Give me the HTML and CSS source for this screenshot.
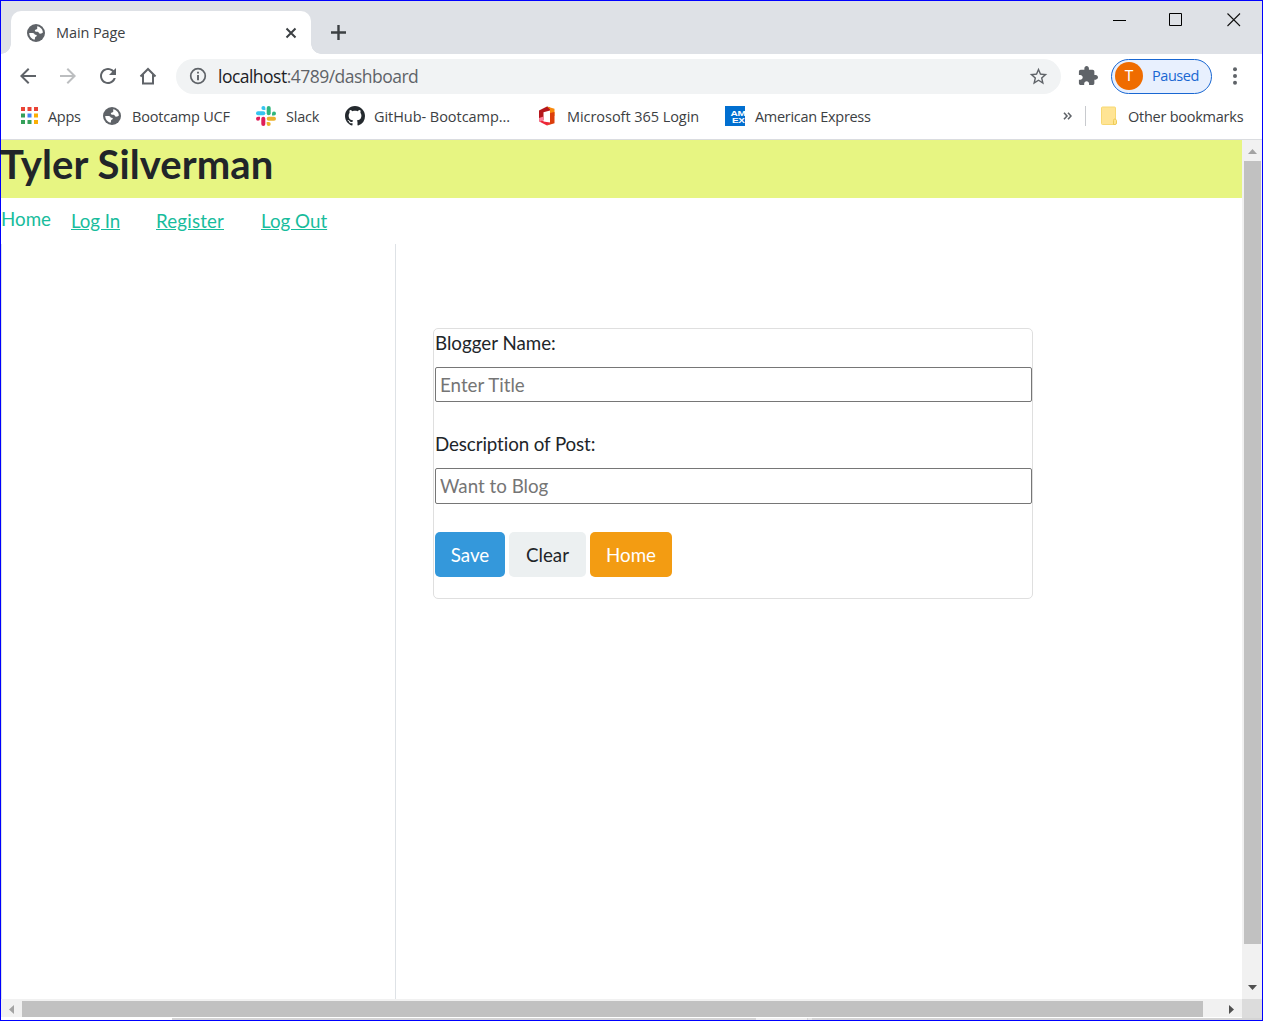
FILE: index.html
```html
<!DOCTYPE html>
<html lang="en">
<head>
<meta charset="utf-8">
<title>Main Page</title>
<link rel="stylesheet" href="styles.css">
</head>
<body>
<svg width="0" height="0" class="defs">
  <symbol id="globe" viewBox="0 0 18 18"><circle cx="9" cy="9" r="9" fill="#5f6368"/><path fill="#fff" d="M10.200 2.200c3.200.5 5.600 3.200 5.700 6.400-.9 1-2 1.400-3.300 1-.6-.2-.7-1.200-1.300-1.700-.8-.6-2.700.1-3.300-.6-.5-.7.1-1.700 1-1.800 1.200-.1 1.300-.4 1.200-1.200zM2.200 8.900h3.500c1.300.1 1.800.7 2 1.600.8.3 1.900 0 2.100 1.100.1 1.100-1.600 1.100-1.800 2l-.1 2C4.700 15.200 2.300 12.500 2.200 8.900z"/></symbol>
</svg>
<div class="window">
  <div class="tabstrip">
    <div class="tab">
      <svg class="fav" width="18" height="18"><use href="#globe"/></svg>
      <span class="tab-title">Main Page</span>
      <svg class="tab-close" width="12" height="12" viewBox="0 0 12 12"><path d="M1.500 1.500l9 9m0-9l-9 9" stroke="#3c4043" stroke-width="2"/></svg>
    </div>
    <svg class="newtab" width="16" height="16" viewBox="0 0 16 16"><path d="M7.500 0v15M0 7.500h15" stroke="#3c4043" stroke-width="2.400"/></svg>
    <div class="controls">
      <svg width="14" height="14" viewBox="0 0 14 14"><path d="M0 7.500h13" stroke="#000"/></svg>
      <svg width="14" height="14" viewBox="0 0 14 14"><path d="M.5.5h12v12H.5z" fill="none" stroke="#000"/></svg>
      <svg width="14" height="14" viewBox="0 0 14 14"><path d="M.5.500l12.500 12.500M13 .5L.5 13" stroke="#111" stroke-width="1.100"/></svg>
    </div>
  </div>
  <div class="toolbar">
    <div class="navbuttons">
      <svg width="24" height="24" viewBox="0 0 24 24" fill="#5f6368"><path d="M20 11H7.830l5.590-5.590L12 4l-8 8 8 8 1.410-1.410L7.830 13H20z"/></svg>
      <svg width="24" height="24" viewBox="0 0 24 24" fill="#bcbec0"><path d="M4 11h12.170l-5.590-5.590L12 4l8 8-8 8-1.410-1.410L16.170 13H4z"/></svg>
      <svg width="24" height="24" viewBox="0 0 24 24" fill="#5f6368"><path d="M17.650 6.350C16.200 4.900 14.210 4 12 4c-4.420 0-7.990 3.580-7.990 8s3.570 8 7.990 8c3.730 0 6.840-2.550 7.730-6h-2.080c-.82 2.330-3.040 4-5.650 4-3.310 0-6-2.690-6-6s2.690-6 6-6c1.660 0 3.140.69 4.220 1.780L13 11h7V4z"/></svg>
      <svg width="24" height="24" viewBox="0 0 24 24"><path d="M4.500 12.500L12 5l7.500 7.500M7 10.800V19.500h10V10.800" fill="none" stroke="#5f6368" stroke-width="2"/></svg>
    </div>
    <div class="omnibox">
      <svg width="18" height="18" viewBox="0 0 18 18"><circle cx="9" cy="9" r="7.300" fill="none" stroke="#5f6368" stroke-width="1.700"/><path d="M9 4.700v1.900M9 8v5.200" stroke="#5f6368" stroke-width="1.900"/></svg>
      <span class="url"><b>localhost</b>:4789/dashboard</span>
      <svg class="star" width="21" height="21" viewBox="0 0 24 24" fill="#5f6368"><path d="M22 9.240l-7.190-.62L12 2 9.190 8.630 2 9.240l5.460 4.730L5.820 21 12 17.270 18.180 21l-1.630-7.030zM12 15.400l-3.760 2.270 1-4.280-3.320-2.880 4.380-.38L12 6.100l1.710 4.040 4.380.38-3.320 2.880 1 4.280z"/></svg>
    </div>
    <svg class="puzzle" width="20" height="20" viewBox="1 1 22 22" fill="#5f6368"><path d="M20.500 11H19V7c0-1.100-.9-2-2-2h-4V3.500C13 2.120 11.880 1 10.500 1S8 2.120 8 3.500V5H4c-1.100 0-1.990.9-1.990 2v3.800H3.500c1.490 0 2.700 1.210 2.700 2.700s-1.210 2.700-2.700 2.700H2V20c0 1.100.9 2 2 2h3.800v-1.500c0-1.490 1.210-2.700 2.700-2.700s2.700 1.210 2.700 2.700V22H17c1.100 0 2-.9 2-2v-4h1.500c1.380 0 2.500-1.120 2.500-2.500S21.880 11 20.500 11z"/></svg>
    <div class="profile"><span class="avatar">T</span><span class="paused">Paused</span></div>
    <svg class="menu" width="6" height="18" viewBox="0 0 6 18" fill="#5f6368"><circle cx="3" cy="2.300" r="2"/><circle cx="3" cy="9" r="2"/><circle cx="3" cy="15.700" r="2"/></svg>
  </div>
  <div class="bookmarks">
    <div class="bm bm-apps"><svg width="18" height="18" viewBox="0 0 18 18"><path fill="#ea4335" d="M0 0h4v4H0zM6.500 0h4v4h-4zM13 0h4v4h-4z"/><path fill="#34a05a" d="M0 6.500h4v4H0zM0 13h4v4H0zM6.500 13h4v4h-4z"/><path fill="#4285f4" d="M6.500 6.500h4v4h-4z"/><path fill="#fbaf05" d="M13 6.500h4v4h-4zM13 13h4v4h-4z"/></svg><span>Apps</span></div>
    <div class="bm bm-ucf"><svg width="18" height="18"><use href="#globe"/></svg><span>Bootcamp UCF</span></div>
    <div class="bm bm-slack"><svg width="20" height="20" viewBox="0 0 20 20"><g fill="#36c5f0"><rect y="5.300" width="9.300" height="4" rx="2"/><path d="M7.400 0a2 2 0 0 1 2 2v2h-2a2 2 0 0 1 0-4z"/></g><g fill="#2eb67d"><rect x="10.700" width="4" height="9.300" rx="2"/><path d="M20 7.400a2 2 0 0 1-2 2h-2v-2a2 2 0 0 1 4 0z"/></g><g fill="#ecb22e"><rect x="10.700" y="10.700" width="9.300" height="4" rx="2"/><path d="M12.700 20a2 2 0 0 1-2-2v-2h2a2 2 0 0 1 0 4z"/></g><g fill="#e01e5a"><rect x="5.300" y="10.700" width="4" height="9.300" rx="2"/><path d="M0 12.700a2 2 0 0 1 2-2h2v2a2 2 0 0 1-4 0z"/></g></svg><span>Slack</span></div>
    <div class="bm bm-git"><svg width="20" height="20" viewBox="0 0 16 16" fill="#24292e"><path d="M8 0C3.580 0 0 3.580 0 8c0 3.540 2.290 6.530 5.470 7.590.4.07.55-.17.55-.38 0-.19-.01-.82-.01-1.490-2.010.37-2.530-.49-2.690-.94-.09-.23-.48-.94-.82-1.130-.28-.15-.68-.52-.01-.53.63-.01 1.080.58 1.230.82.72 1.210 1.870.87 2.330.66.07-.52.28-.87.51-1.070-1.780-.2-3.640-.89-3.640-3.950 0-.87.31-1.590.82-2.150-.08-.2-.36-1.020.08-2.120 0 0 .67-.21 2.200.82.64-.18 1.320-.27 2-.27s1.360.09 2 .27c1.530-1.040 2.200-.82 2.200-.82.44 1.100.16 1.920.08 2.120.51.56.82 1.270.82 2.150 0 3.070-1.870 3.750-3.650 3.950.29.25.54.73.54 1.480 0 1.070-.01 1.930-.01 2.200 0 .21.15.46.55.38A8.010 8.010 0 0 0 16 8c0-4.420-3.580-8-8-8z"/></svg><span>GitHub- Bootcamp...</span></div>
    <div class="bm bm-ms"><svg width="18" height="20" viewBox="0 0 18 20"><path fill="#b5161b" d="M1 4.500L9 .500l3 1v3L5.500 6.200V14L1 15.500z"/><path fill="#f98a0c" d="M9 .500l7.500 2.300V10H12V3.500z"/><path fill="#dc3e0c" d="M12 7l4.500-1v11.200L9 19.500l3-3z"/><path fill="#ed2738" d="M1.200 15.400L5.500 14.500v1l6.500 1V17l-3 2.500z"/><path fill="#ff7f9b" d="M1 12l4.500-1.500V14L1.200 15.400z"/></svg><span>Microsoft 365 Login</span></div>
    <div class="bm bm-amex"><svg width="20" height="20" viewBox="0 0 20 20"><path fill="#016fd0" d="M0 0h20v20H0z"/><text class="amex" x="5.500" y="9.600" textLength="15" lengthAdjust="spacingAndGlyphs">AM</text><text class="amex" x="7" y="17" textLength="12.500" lengthAdjust="spacingAndGlyphs">EX</text></svg><span>American Express</span></div>
    <svg class="more" width="9" height="8" viewBox="0 0 9 8"><path d="M1 .700L4 4 1 7.300M5 .700L8 4 5 7.300" fill="none" stroke="#5f6368" stroke-width="1.600"/></svg>
    <i class="sep"></i>
    <div class="bm bm-other"><svg width="17" height="20" viewBox="0 0 17 20"><rect x=".5" y="1" width="14" height="17.500" rx="1" fill="#ffe494" stroke="#f7d873"/><path d="M12.500 14.500q0-1.500 1.300-1.500t1.700 1.500v2.500q0 1.500-1.500 1.500h-1.500z" fill="#ffe58d" stroke="#eecb58"/></svg><span>Other bookmarks</span></div>
  </div>
  <div class="viewport">
    <main class="page">
      <header class="hero"><h2>Tyler Silverman</h2></header>
      <nav class="links"><a class="home" href="#">Home</a><a class="login" href="#">Log In</a><a class="register" href="#">Register</a><a class="logout" href="#">Log Out</a></nav>
      <div class="columns">
        <aside class="side"></aside>
        <section class="content">
          <form class="card">
            <label for="name">Blogger Name:</label>
            <input id="name" placeholder="Enter Title">
            <label for="desc" class="second">Description of Post:</label>
            <input id="desc" class="tall" placeholder="Want to Blog">
            <div class="buttons"><button type="button" class="save">Save</button><button type="button" class="clear">Clear</button><button type="button" class="go-home">Home</button></div>
          </form>
        </section>
      </div>
    </main>
    <div class="vbar">
      <svg width="20" height="21" viewBox="0 0 20 21"><path d="M6 14l4.500-5 4.500 5z" fill="#a3a3a3"/></svg>
      <i class="vthumb"></i>
      <svg class="down" width="20" height="22" viewBox="0 0 20 22"><path d="M6 8h9l-4.500 5z" fill="#505050"/></svg>
    </div>
    <div class="hbar">
      <svg width="21" height="18" viewBox="0 0 21 18"><path d="M13 6v9l-5-4.500z" fill="#a3a3a3"/></svg>
      <i class="hthumb"></i>
      <svg class="right" width="21" height="18" viewBox="0 0 21 18"><path d="M8 6v9l5-4.500z" fill="#505050"/></svg>
    </div>
    <i class="corner"></i>
  </div>
  <div class="edge"><i class="edge-left"></i><i class="edge-mid"></i><i class="edge-small"></i></div>
</div>
</body>
</html>
```
FILE: styles.css
```css
* { box-sizing: border-box; }
html, body { margin: 0; height: 100%; overflow: hidden; }
body { font-family: "Open Sans", "Noto Sans", sans-serif; background: #fff; color: #3c4043; }
svg { display: block; flex: none; }
.defs { position: absolute; }
.window { width: 1263px; height: 1021px; border: 1px solid #00f; display: flex; flex-direction: column; }
.window > * { flex: none; }

/* Tab strip */
.tabstrip { height: 53px; background: #dee1e6; display: flex; padding: 10px 0 0 10px; }
.tab { position: relative; width: 300px; height: 43px; background: #fff; border-radius: 10px 10px 0 0; display: flex; align-items: center; padding: 0 14px 0 16px; }
.tab::before, .tab::after { content: ""; position: absolute; bottom: 0; width: 10px; height: 10px; }
.tab::before { left: -10px; background: radial-gradient(circle at 0 0, #dee1e6 9.5px, #fff 10px); }
.tab::after { right: -10px; background: radial-gradient(circle at 100% 0, #dee1e6 9.5px, #fff 10px); }
.tab-title { margin-left: 11px; font-size: 14.5px; letter-spacing: -.1px; }
.tab-close { margin-left: auto; }
.newtab { margin: 14px 0 0 20px; }
.controls { display: flex; margin: 2px 21px 0 auto; }
.controls svg { margin-left: 43px; }
.controls svg:nth-child(2) { margin-left: 42px; }
.controls svg:nth-child(3) { margin-left: 44px; }

/* Toolbar */
.toolbar { height: 44px; display: flex; align-items: center; padding-left: 15px; }
.navbuttons { display: flex; gap: 16px; width: 160px; }
.omnibox { width: 885px; height: 35px; border-radius: 18px; background: #f1f3f4; display: flex; align-items: center; padding: 0 12px 0 13px; }
.url { margin-left: 11px; font-size: 17.5px; letter-spacing: -.52px; color: #5f6368; }
.url b { font-weight: 400; color: #202124; }
.star { margin-left: auto; }
.puzzle { margin-left: 17px; }
.profile { width: 101px; height: 35px; margin-left: 13px; border: 1px solid #1967d2; border-radius: 18px; background: #e8f0fe; display: flex; align-items: center; padding-left: 3px; }
.avatar { width: 28px; height: 28px; border-radius: 50%; background: #ef6c00; color: #fff; font: 15px/29px Roboto, sans-serif; text-align: center; }
.paused { margin: -2px 0 0 9px; color: #1967d2; font-size: 14.5px; letter-spacing: -.45px; }
.menu { margin-left: 20px; }

/* Bookmarks */
.bookmarks { height: 42px; border-bottom: 1px solid #dadce0; display: flex; align-items: center; padding: 0 0 5px 20px; font-size: 14.5px; }
.bm { display: flex; align-items: center; white-space: nowrap; letter-spacing: -.3px; }
.bm-apps { width: 82px; gap: 9px; }
.bm-ucf { width: 153px; gap: 11px; letter-spacing: -.2px; }
.bm-slack { width: 89px; gap: 10px; letter-spacing: -.2px; }
.bm-git { width: 193px; gap: 9px; letter-spacing: -.05px; }
.bm-ms { width: 187px; gap: 11px; letter-spacing: -.05px; }
.bm-amex { width: 338px; gap: 10px; }
.bm-other { gap: 10px; letter-spacing: -.25px; }
.amex { font: 700 8px "Liberation Sans", sans-serif; fill: #fff; }
.sep { width: 1px; height: 20px; background: #c8cace; margin: 0 15px 0 13px; }

/* Page area with its scrollbars */
.viewport { height: 878px; display: grid; grid-template-columns: 1241px 20px; grid-template-rows: 859px 19px; }
.page { font-family: Lato, sans-serif; font-size: 18.75px; line-height: 28px; font-variant-ligatures: none; color: #212529; display: flex; flex-direction: column; }
.hero { height: 58px; background: #e7f582; }
.hero h2 { margin: 0 0 0 -1px; font-size: 40px; line-height: 48px; font-weight: 700; letter-spacing: .1px; }
.links { height: 46px; display: flex; padding-top: 9px; }
.links a { color: #18bc9c; }
.links .home { text-decoration: none; width: 70px; margin-top: -2px; }
.links .login { width: 85px; letter-spacing: -.1px; }
.links .register { width: 105px; letter-spacing: .15px; }
.columns { flex: 1; display: flex; }
.side { width: 395px; border: solid #dee2e6; border-width: 0 1px; }
.content { flex: 1; padding: 84px 0 0 37px; }
.card { width: 600px; height: 271px; border: 1px solid #dfdfdf; border-radius: 5px; padding-left: 1px; display: flex; flex-direction: column; }
.card label { line-height: 28px; margin-bottom: 10px; }
.card .second { margin-top: 28px; letter-spacing: -.1px; }
.card input { width: 597px; height: 35px; border: 1px solid #767676; border-radius: 2px; padding: 1px 4px; font: inherit; outline: 0; }
.card .tall { height: 36px; padding-bottom: 3px; }
.card input::placeholder { color: #757575; }
.buttons { display: flex; gap: 4px; margin-top: 28px; }
.buttons button { height: 45px; border: 0; border-radius: 5px; padding: 0; font: inherit; color: #fff; }
.buttons .save { width: 70px; background: #3498db; }
.buttons .clear { width: 77px; background: #ecf0f1; color: #212529; }
.buttons .go-home { width: 82px; background: #f39c12; }

.vbar { background: #f1f1f1; display: flex; flex-direction: column; }
.vthumb { width: 17px; height: 783px; margin-left: 2px; background: #c1c1c1; }
.vbar .down { margin-top: auto; }
.hbar { background: #f1f1f1; display: flex; height: 18px; }
.hthumb { width: 1181px; height: 16px; margin-top: 2px; background: #c1c1c1; }
.hbar .right { margin-left: auto; }
.corner { background: #dcdcdc; }
.edge { height: 2px; background: #d4d4d4; display: flex; }
.edge-left { width: 171px; background: #fff; }
.edge-mid { width: 51px; margin-left: 584px; background: #f0f0f0; }
.edge-small { width: 4px; margin-left: 1px; background: #e6e6e6; }
```
